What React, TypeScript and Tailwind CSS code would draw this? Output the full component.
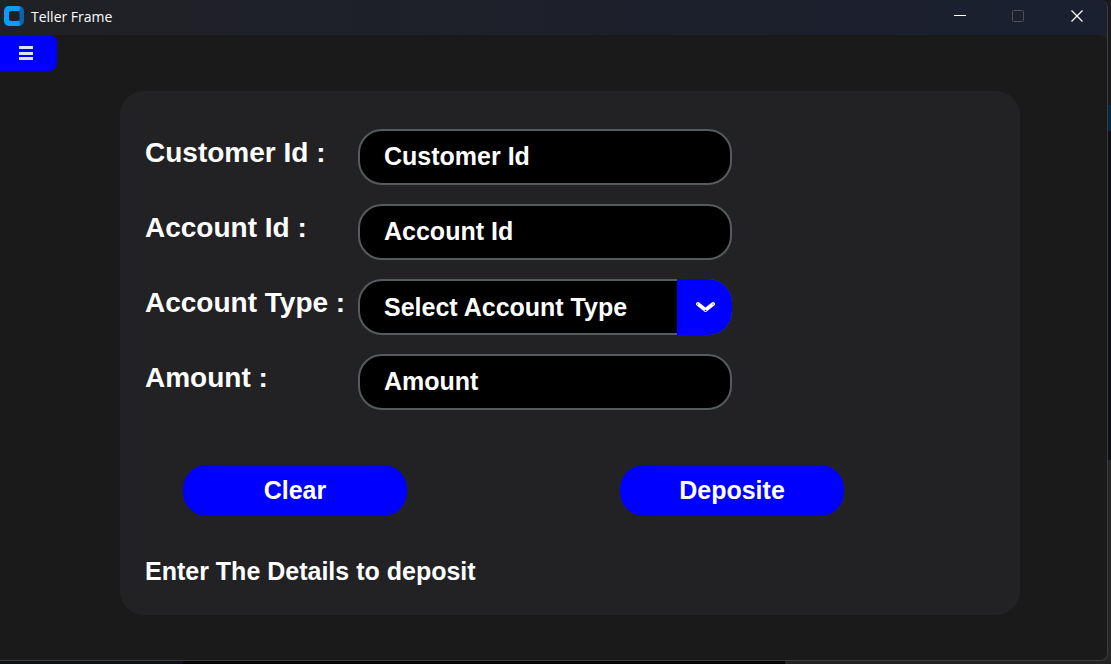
import { ReactNode } from "react";

const fieldClass =
  "h-14 w-full appearance-none rounded-3xl border-2 border-[#565b5e] bg-black px-6 text-[25px] font-bold text-white placeholder:text-white placeholder:opacity-100 outline-none";

function Row({ id, label, children }: { id: string; label: string; children: ReactNode }) {
  return (
    <div className="flex items-start">
      <label htmlFor={id} className="w-[213px] shrink-0 whitespace-nowrap text-[28px] leading-12 font-bold">
        {label}
      </label>
      <div className="relative w-full max-w-[374px]">{children}</div>
    </div>
  );
}

function TitleBar() {
  return (
    <header className="flex h-[35px] items-center bg-linear-to-r from-[#202124] via-[#1e202a] via-40% to-[#1a2030] pl-1 text-white">
      <svg width="20" height="20" viewBox="0 0 20 20" aria-hidden="true" className="-mt-1 shrink-0">
        <rect width="20" height="20" rx="5" fill="#0a63ad" />
        <path d="M5 0h10l1.5 2-1.5 3v10l1.5 3-1.5 2H5a5 5 0 0 1-5-5V5a5 5 0 0 1 5-5Z" fill="#0a9bfb" />
        <rect x="5" y="5" width="10.5" height="10" rx="2" fill="#1e2024" />
      </svg>
      <h1 className="-mt-0.5 ml-[7px] grow font-['Open_Sans',sans-serif] text-[14px] leading-5">Teller Frame</h1>
      <div className="-mt-1 flex">
        <button type="button" aria-label="Minimize" className="flex h-8 w-[58px] items-center justify-center">
          <svg width="12" height="12" viewBox="0 0 12 12" fill="none" stroke="#fff"><path d="M0 5.5h12" /></svg>
        </button>
        <button type="button" aria-label="Maximize" disabled className="flex h-8 w-[58px] items-center justify-center">
          <svg width="12" height="12" viewBox="0 0 12 12" fill="none" stroke="#4d505b"><rect x=".5" y=".5" width="11" height="11" rx="1" /></svg>
        </button>
        <button type="button" aria-label="Close" className="flex h-8 w-[60px] items-center justify-center">
          <svg width="12" height="12" viewBox="0 0 12 12" fill="none" stroke="#fff" strokeWidth="1.2"><path d="m.5.5 11 11m0-11-11 11" /></svg>
        </button>
      </div>
    </header>
  );
}

export default function App() {
  return (
    <div className="flex min-h-screen flex-col bg-[linear-gradient(to_bottom,#1a1a1c_105px,#002a45_105px,#002a45_131px,#0c0f18_131px,#0c0f18_460px,#262626_460px)] font-['Liberation_Sans',Arial,sans-serif] text-white">
      <div className="mr-[3px] flex grow flex-col overflow-hidden rounded-r-lg border-r border-b border-[#3d3d3f] bg-[#1e2229]">
        <TitleBar />
        <main className="grow rounded-tr-lg bg-[#1a1a1a] pb-11">
          <button type="button" aria-label="Menu" className="flex h-9 w-[57px] items-center rounded-r-lg bg-[#0000ff] pl-[19px]">
            <svg width="14" height="14" viewBox="0 0 14 14" fill="#dce4ee" aria-hidden="true">
              <path d="M0 0h14v3H0zM0 6h14v3H0zM0 11h14v3H0z" />
            </svg>
          </button>
          <form className="mt-5 mr-[87px] ml-[120px] rounded-3xl bg-[#222224] pt-[38px] pr-6 pb-7 pl-[25px]">
            <div className="flex flex-col gap-[19px]">
              <Row id="customer" label="Customer Id :">
                <input id="customer" placeholder="Customer Id" className={`${fieldClass} pb-0.5`} />
              </Row>
              <Row id="account" label="Account Id :">
                <input id="account" placeholder="Account Id" className={`${fieldClass} pb-0.5`} />
              </Row>
              <Row id="type" label="Account Type :">
                <select id="type" defaultValue="" className={`${fieldClass} pt-0.5`}>
                  <option value="">Select Account Type</option>
                  <option>Savings</option>
                  <option>Current</option>
                </select>
                <span className="pointer-events-none absolute inset-y-0 right-0 flex w-[55px] items-center justify-center rounded-r-3xl bg-[#0000ff]">
                  <svg width="20" height="14" viewBox="0 0 20 14" fill="none" aria-hidden="true">
                    <path d="m3 4 7.5 6L18 4" stroke="#fff" strokeWidth="4" strokeLinecap="round" strokeLinejoin="round" />
                    <circle cx="2.5" cy="4" r=".6" fill="#00f" />
                    <circle cx="18" cy="4" r=".6" fill="#00f" />
                    <circle cx="10.5" cy="10.5" r=".8" fill="#00f" />
                  </svg>
                </span>
              </Row>
              <Row id="amount" label="Amount :">
                <input id="amount" placeholder="Amount" className={`${fieldClass} pb-0.5`} />
              </Row>
            </div>
            <div className="mt-[55px] flex gap-[213px] pl-[38px] text-[25px] font-bold">
              <button type="reset" className="h-[51px] w-56 rounded-3xl bg-[#0000ff]">Clear</button>
              <button type="button" className="h-[51px] w-56 rounded-3xl bg-[#0000ff]">Deposite</button>
            </div>
            <p className="mt-[39px] text-[25px] leading-8 font-bold">Enter The Details to deposit</p>
          </form>
        </main>
      </div>
      <div className="h-[3px] bg-[linear-gradient(to_right,#0d1015_183px,#050505_183px,#050505_785px,#222222_785px)]" />
    </div>
  );
}
